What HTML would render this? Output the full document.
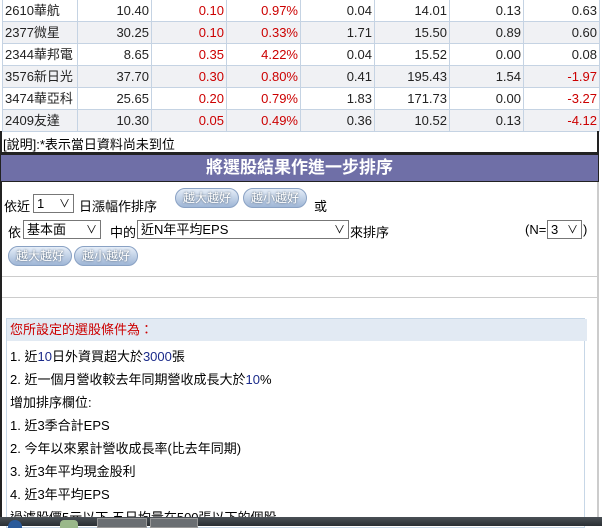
<!DOCTYPE html><html><head><meta charset="utf-8"><style>
body{margin:0;width:602px;height:526px;overflow:hidden;background:#fff;font-family:"Liberation Sans","Noto Sans CJK TC",sans-serif;font-size:13px;position:relative}
.a{position:absolute;white-space:nowrap}
table{border-collapse:collapse;position:absolute;left:2px;top:-1px;table-layout:fixed;width:597px}
td{border:1px solid #c5d3e3;height:22px;padding:0 2px;text-align:right;font-size:13px;color:#222;white-space:nowrap;overflow:hidden;box-sizing:border-box;line-height:20px}
td:first-child{text-align:left}
tr:nth-child(even) td{background:#f0f1f4}
.r{color:#c00}
.btn{position:absolute;height:18px;border-radius:10px;background:linear-gradient(#e6eef8,#9fb6d6);border:1px solid #8aa2c4;color:#fff;font-size:12px;line-height:18px;text-align:center;width:62px;text-shadow:0 0 2px #456}
.sel{position:absolute;border:1px solid #777;background:#fff;height:19px;font-size:13px;line-height:18px;padding-left:3px;box-sizing:border-box;white-space:nowrap}
.sel i{position:absolute;right:3px;top:0;font-style:normal;font-size:11px}
.ln{position:absolute;left:10px;font-size:13px;white-space:nowrap}
.b{color:#1a2a8a}
</style></head><body>
<table>
<colgroup><col style="width:75px"><col style="width:74px"><col style="width:75px"><col style="width:74px"><col style="width:74px"><col style="width:75px"><col style="width:74px"><col style="width:76px"></colgroup>
<tr><td>2610華航</td><td>10.40</td><td class="r">0.10</td><td class="r">0.97%</td><td>0.04</td><td>14.01</td><td>0.13</td><td>0.63</td></tr>
<tr><td>2377微星</td><td>30.25</td><td class="r">0.10</td><td class="r">0.33%</td><td>1.71</td><td>15.50</td><td>0.89</td><td>0.60</td></tr>
<tr><td>2344華邦電</td><td>8.65</td><td class="r">0.35</td><td class="r">4.22%</td><td>0.04</td><td>15.52</td><td>0.00</td><td>0.08</td></tr>
<tr><td>3576新日光</td><td>37.70</td><td class="r">0.30</td><td class="r">0.80%</td><td>0.41</td><td>195.43</td><td>1.54</td><td class="r">-1.97</td></tr>
<tr><td>3474華亞科</td><td>25.65</td><td class="r">0.20</td><td class="r">0.79%</td><td>1.83</td><td>171.73</td><td>0.00</td><td class="r">-3.27</td></tr>
<tr><td>2409友達</td><td>10.30</td><td class="r">0.05</td><td class="r">0.49%</td><td>0.36</td><td>10.52</td><td>0.13</td><td class="r">-4.12</td></tr>
</table>
<div class="a" style="left:0;top:131px;width:599px;height:23px;border-left:2px solid #222;border-right:2px solid #222;border-bottom:2px solid #222;box-sizing:border-box"></div>
<div class="a" style="left:3px;top:134px">[說明]:*表示當日資料尚未到位</div>
<div class="a" style="left:0;top:154px;width:599px;height:28px;background:#6f6fa7;border:1px solid #222;box-sizing:border-box;color:#fff;font-weight:bold;font-size:17px;text-align:center;line-height:26px">將選股結果作進一步排序</div>
<div class="a" style="left:0;top:182px;width:599px;height:344px;border-left:2px solid #222;border-right:2px solid #ccc;box-sizing:border-box"></div>
<div class="a" style="left:4px;top:196px">依近</div>
<div class="sel" style="left:33px;top:194px;width:41px">1<i>∨</i></div>
<div class="a" style="left:79px;top:196px">日漲幅作排序</div>
<div class="btn" style="left:175px;top:188px">越大越好</div>
<div class="btn" style="left:243px;top:188px">越小越好</div>
<div class="a" style="left:314px;top:196px">或</div>
<div class="a" style="left:8px;top:222px">依</div>
<div class="sel" style="left:23px;top:220px;width:78px">基本面<i>∨</i></div>
<div class="a" style="left:110px;top:222px">中的</div>
<div class="sel" style="left:137px;top:220px;width:212px">近N年平均EPS<i>∨</i></div>
<div class="a" style="left:350px;top:222px">來排序</div>
<div class="a" style="left:525px;top:222px">(N=</div>
<div class="sel" style="left:547px;top:220px;width:35px">3<i>∨</i></div>
<div class="a" style="left:583px;top:222px">)</div>
<div class="btn" style="left:8px;top:246px">越大越好</div>
<div class="btn" style="left:74px;top:246px">越小越好</div>
<div class="a" style="left:2px;top:276px;width:596px;border-top:1px solid #ccc"></div>
<div class="a" style="left:2px;top:297px;width:596px;border-top:1px solid #ccc"></div>
<div class="a" style="left:6px;top:318px;width:579px;height:210px;border:1px solid #c7d7e7;box-sizing:border-box"></div>
<div class="a" style="left:7px;top:319px;width:577px;height:22px;background:#e2eaf3;color:#c00;line-height:22px;padding-left:3px;font-size:13px">您所設定的選股條件為：</div>
<div class="ln" style="top:346px">1. 近<span class="b">10</span>日外資買超大於<span class="b">3000</span>張</div>
<div class="ln" style="top:369px">2. 近一個月營收較去年同期營收成長大於<span class="b">10</span>%</div>
<div class="ln" style="top:392px">增加排序欄位:</div>
<div class="ln" style="top:415px">1. 近3季合計EPS</div>
<div class="ln" style="top:438px">2. 今年以來累計營收成長率(比去年同期)</div>
<div class="ln" style="top:461px">3. 近3年平均現金股利</div>
<div class="ln" style="top:484px">4. 近3年平均EPS</div>
<div class="ln" style="top:507px">過濾股價5元以下,五日均量在500張以下的個股</div>
<div class="a" style="left:0;top:517px;width:602px;height:9px;background:linear-gradient(#4a5056,#2a2f33)"></div>
<div class="a" style="left:8px;top:520px;width:14px;height:8px;border-radius:7px 7px 0 0;background:#2a5a9a"></div>
<div class="a" style="left:60px;top:520px;width:18px;height:8px;border-radius:4px 4px 0 0;background:#9ab88a"></div>
<div class="a" style="left:97px;top:518px;width:48px;height:8px;background:#6a6e72;border:1px solid #999"></div>
<div class="a" style="left:150px;top:518px;width:46px;height:8px;background:#6a6e72;border:1px solid #999"></div>
</body></html>
